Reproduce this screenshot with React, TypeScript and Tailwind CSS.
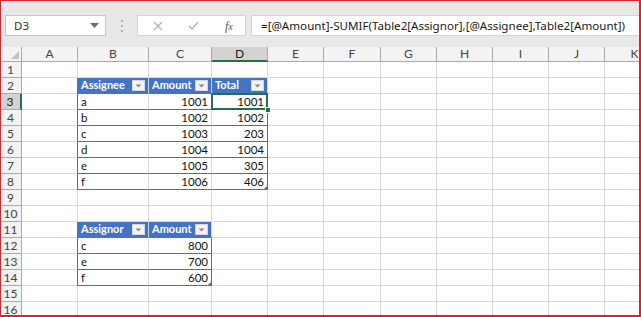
import React from 'react';

const COLS = ['A', 'B', 'C', 'D', 'E', 'F', 'G', 'H', 'I', 'J', 'K'];
const ROWS = Array.from({ length: 16 }, (_, i) => i + 1);

type Cell = {
  text?: string;
  right?: boolean;
  kind?: 'head' | 'body';
  filter?: boolean;
  edgeL?: boolean;
  edgeR?: boolean;
  corner?: boolean;
};

const table1: Record<number, string[]> = {
  2: ['Assignee', 'Amount', 'Total'],
  3: ['a', '1001', '1001'],
  4: ['b', '1002', '1002'],
  5: ['c', '1003', '203'],
  6: ['d', '1004', '1004'],
  7: ['e', '1005', '305'],
  8: ['f', '1006', '406'],
};

const table2: Record<number, string[]> = {
  11: ['Assignor', 'Amount'],
  12: ['c', '800'],
  13: ['e', '700'],
  14: ['f', '600'],
};

function getCell(r: number, c: number): Cell {
  // c: 0 = A
  if (table1[r] && c >= 1 && c <= 3) {
    const i = c - 1;
    return {
      text: table1[r][i],
      right: r > 2 && i > 0,
      kind: r === 2 ? 'head' : 'body',
      filter: r === 2,
      edgeL: i === 0,
      edgeR: i === 2,
      corner: r === 8 && i === 2,
    };
  }
  if (table2[r] && c >= 1 && c <= 2) {
    const i = c - 1;
    return {
      text: table2[r][i],
      right: r > 11 && i > 0,
      kind: r === 11 ? 'head' : 'body',
      filter: r === 11,
      edgeL: i === 0,
      edgeR: i === 1,
      corner: r === 14 && i === 1,
    };
  }
  return {};
}

function FilterButton() {
  return (
    <div className="absolute right-[3px] top-[2px] w-[13px] h-[11px] bg-[#f4f4f4] border border-[#d6d6d6] flex items-center justify-center">
      <svg width="7" height="4" viewBox="0 0 7 4">
        <path d="M0.5 0.5 H6.5 L3.5 3.5 Z" fill="#8a8a8a" />
      </svg>
    </div>
  );
}

export default function App() {
  const cellFont = { fontFamily: 'Lato, "Liberation Sans", sans-serif' };
  return (
    <div className="relative w-[641px] h-[317px] overflow-hidden bg-white select-none" style={{ fontFamily: '"Noto Sans", "Liberation Sans", sans-serif' }}>
      {/* ribbon edge + formula bar */}
      <div className="h-[47px] bg-[#e8e8e8] flex items-start pt-[15px] pl-[5px]">
        <div className="w-[101px] h-[21px] bg-white border border-[#c6c6c6] flex items-center justify-between pl-[8px] pr-[6px]">
          <span className="text-[11.5px] text-[#333]">D3</span>
          <svg width="9" height="5" viewBox="0 0 9 5">
            <path d="M0 0 H9 L4.5 5 Z" fill="#6e6e6e" />
          </svg>
        </div>
        <div className="w-[31px] h-[21px] flex flex-col items-center justify-center gap-[3px]">
          <span className="w-[2px] h-[2px] bg-[#b5b5b5]" />
          <span className="w-[2px] h-[2px] bg-[#b5b5b5]" />
          <span className="w-[2px] h-[2px] bg-[#b5b5b5]" />
        </div>
        <div className="w-[109px] h-[21px] bg-white border border-[#d4d4d4] flex items-center">
          <svg className="ml-[15px]" width="10" height="10" viewBox="0 0 10 10">
            <path d="M1 1 L9 9 M9 1 L1 9" stroke="#b3b3b3" strokeWidth="1.3" />
          </svg>
          <svg className="ml-[25px]" width="11" height="9" viewBox="0 0 11 9">
            <path d="M1 5 L4 8 L10 1" stroke="#b3b3b3" strokeWidth="1.3" fill="none" />
          </svg>
          <span className="ml-[26px] text-[12px] italic text-[#555]" style={{ fontFamily: '"Liberation Serif", serif' }}>
            f<span className="text-[10px]">x</span>
          </span>
        </div>
        <div className="ml-[5px] flex-1 h-[21px] bg-white border border-[#d4d4d4] flex items-center pl-[9px]">
          <span className="text-[11.6px] text-[#1a1a1a] whitespace-nowrap">
            =[@Amount]-SUMIF(Table2[Assignor],[@Assignee],Table2[Amount])
          </span>
        </div>
      </div>

      {/* worksheet grid */}
      <div
        className="grid grid-cols-[22px_56px_71px_63px_56px_56px_57px_56px_56px_56px_56px_60px] grid-rows-[15px_repeat(16,16px)]"
        style={cellFont}
      >
        {/* corner */}
        <div className="relative bg-[#f3f3f3] border-r border-b border-[#ababab]">
          <svg className="absolute right-[2px] bottom-[2px]" width="8" height="8" viewBox="0 0 8 8">
            <path d="M8 0 V8 H0 Z" fill="#c4c4c4" />
          </svg>
        </div>
        {COLS.map((c) => (
          <div
            key={c}
            className={
              c === 'D'
                ? 'bg-[#d3d3d3] border-r border-[#ababab] border-b-2 border-b-[#217346] flex items-center justify-center text-[12px] text-[#222]'
                : 'bg-[#f3f3f3] border-r border-b border-[#ababab] flex items-center justify-center text-[12px] text-[#444]'
            }
          >
            {c}
          </div>
        ))}

        {ROWS.map((r) => (
          <React.Fragment key={r}>
            <div
              className={
                r === 3
                  ? 'bg-[#d3d3d3] border-b border-[#ababab] border-r-2 border-r-[#217346] flex items-center justify-center text-[12px] text-[#222]'
                  : 'bg-[#f3f3f3] border-r border-b border-[#ababab] flex items-center justify-center text-[12px] text-[#444]'
              }
            >
              {r}
            </div>
            {COLS.map((_, ci) => {
              const cell = getCell(r, ci);
              let cls = 'relative border-r border-b border-[#dadada] flex items-end px-[3px] pb-[1px] text-[11.5px] leading-none whitespace-nowrap';
              if (cell.kind === 'head') {
                cls = 'relative bg-[#4472c4] border-r border-b border-r-[#c9d3e6] border-b-[#4472c4] flex items-center px-[3px] text-[11px] font-bold text-white whitespace-nowrap';
              } else if (cell.kind === 'body') {
                cls += ' border-b-[#4d6fb0] text-[#111]';
              }
              if (cell.edgeL) cls += ' border-l border-l-[#4d6fb0] -ml-[1px]';
              if (cell.edgeR && cell.kind === 'body') cls += ' border-r-[#4d6fb0]';
              if (cell.right) cls += ' justify-end';
              const selected = r === 3 && ci === 3;
              return (
                <div key={ci} className={cls}>
                  <span className={cell.kind === 'head' ? '' : 'pb-[1px]'}>{cell.text}</span>
                  {cell.filter && <FilterButton />}
                  {cell.corner && (
                    <svg className="absolute right-[-1px] bottom-[-1px]" width="5" height="5" viewBox="0 0 5 5">
                      <path d="M5 0 V5 H0 Z" fill="#4d6fb0" />
                    </svg>
                  )}
                  {selected && (
                    <>
                      <div className="absolute -left-[1px] -top-[1px] -right-[1px] -bottom-[1px] border-2 border-[#217346] pointer-events-none" />
                      <div className="absolute -right-[4px] -bottom-[4px] w-[6px] h-[6px] bg-[#217346] border border-white z-10" />
                    </>
                  )}
                </div>
              );
            })}
          </React.Fragment>
        ))}
      </div>

      {/* red annotation frame from the original capture */}
      <div className="absolute inset-0 border-2 border-[#e0202a] border-t border-l pointer-events-none" />
    </div>
  );
}
